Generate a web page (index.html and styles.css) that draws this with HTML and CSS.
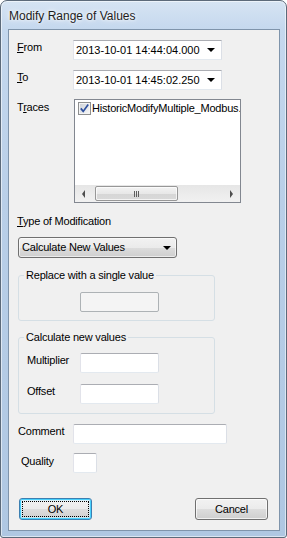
FILE: index.html
```html
<!DOCTYPE html>
<html lang="en">
<head>
    <meta charset="UTF-8">
    <title>Modify Range of Values</title>
    <link rel="stylesheet" href="styles.css">
</head>
<body>
<div class="window">
    <div class="titlebar">Modify Range of Values</div>
    <div class="client">

        <div class="row row-from">
            <span class="label"><u>F</u>rom</span>
            <div class="combo date">
                <span class="combo-text">2013-10-01 14:44:04.000</span>
                <span class="arrow"></span>
            </div>
        </div>

        <div class="row row-to">
            <span class="label"><u>T</u>o</span>
            <div class="combo date">
                <span class="combo-text">2013-10-01 14:45:02.250</span>
                <span class="arrow"></span>
            </div>
        </div>

        <div class="row row-traces">
            <span class="label label-traces">T<u>r</u>aces</span>
            <div class="listbox">
                <div class="list-items">
                    <div class="list-item">
                        <svg class="check" width="13" height="13" viewBox="0 0 13 13">
                            <defs>
                                <linearGradient id="cb" x1="0" y1="0" x2="1" y2="1">
                                    <stop offset="0" stop-color="#cfd3d9"/>
                                    <stop offset="1" stop-color="#f6f6f6"/>
                                </linearGradient>
                            </defs>
                            <rect x="0.5" y="0.5" width="12" height="12" fill="#f4f4f4" stroke="#8e8f8f"/>
                            <rect x="2" y="2" width="9" height="9" fill="url(#cb)"/>
                            <path d="M2.8 6.4 L5.2 9.4 L10.2 2.6" fill="none" stroke="#2d4f9e" stroke-width="1.7"/>
                        </svg>
                        <span class="item-text">HistoricModifyMultiple_Modbus.</span>
                    </div>
                </div>
                <div class="hscroll">
                    <div class="sb-btn"><span class="sb-left"></span></div>
                    <div class="sb-track">
                        <div class="sb-thumb">
                            <span class="grip"></span>
                        </div>
                    </div>
                    <div class="sb-btn"><span class="sb-right"></span></div>
                </div>
            </div>
        </div>

        <div class="type-label"><u>T</u>ype of Modification</div>

        <div class="combo-btn">
            <span class="combo-text">Calculate New Values</span>
            <span class="arrow"></span>
        </div>

        <fieldset class="group group-replace">
            <legend>Replace with a single value</legend>
            <div class="textbox disabled tb-single"></div>
        </fieldset>

        <fieldset class="group group-calc">
            <legend>Calculate new values</legend>
            <div class="row row-mult">
                <span class="label label-group">Multiplier</span>
                <div class="textbox tb-group"></div>
            </div>
            <div class="row row-offset">
                <span class="label label-group">Offset</span>
                <div class="textbox tb-group"></div>
            </div>
        </fieldset>

        <div class="row row-comment">
            <span class="label label-comment">Comment</span>
            <div class="textbox tb-comment"></div>
        </div>

        <div class="row row-quality">
            <span class="label label-quality">Quality</span>
            <div class="textbox tb-quality"></div>
        </div>

        <div class="buttons">
            <div class="button default"><span class="focus">OK</span></div>
            <div class="button">Cancel</div>
        </div>

    </div>
</div>
</body>
</html>
```

FILE: styles.css
```css
* {
    box-sizing: border-box;
}

body {
    margin: 0;
    font-family: "Liberation Sans", Arial, sans-serif;
    font-size: 11px;
    color: #000;
    letter-spacing: -0.2px;
}

/* window frame */
.window {
    width: 287px;
    height: 538px;
    border: 1px solid #5c6a7a;
    border-radius: 7px 7px 3px 3px;
    padding: 0 6px 6px 7px;
    display: flex;
    flex-direction: column;
    background: linear-gradient(to bottom, #d6e4f3 0, #c5d8ee 28px, #b9cfe8 200px, #afc7e2 100%);
    box-shadow: inset 0 0 0 1px rgba(255, 255, 255, 0.55);
}

.titlebar {
    height: 28px;
    display: flex;
    align-items: center;
    padding: 1px 0 0 1px;
    font-size: 12px;
    letter-spacing: 0;
    color: #1e1e1e;
    text-shadow: 0 0 6px #fff, 0 0 3px #fff;
}

.client {
    flex: 1;
    border: 1px solid #7f94ab;
    background: #f0f0f0;
    padding-top: 10px;
}

/* rows */
.row {
    display: flex;
    align-items: flex-start;
    margin-left: 8px;
}

.label {
    width: 56px;
    line-height: 13px;
    margin-top: 1px;
    flex-shrink: 0;
}

.row-to {
    margin-top: 10px;
}

.row-traces {
    margin-top: 9px;
}

.label-traces {
    width: 57px;
    margin-top: 2px;
}

/* date combos */
.combo {
    width: 149px;
    height: 20px;
    background: #fff;
    border: 1px solid;
    border-color: #abadb3 #dbdfe6 #e3e9ef #e2e3ea;
    display: flex;
    align-items: center;
    padding: 0 0 0 2px;
}

.combo-text {
    flex: 1;
    line-height: 13px;
    white-space: nowrap;
}

.date .combo-text {
    letter-spacing: 0;
}

.arrow {
    width: 0;
    height: 0;
    border-left: 4px solid transparent;
    border-right: 4px solid transparent;
    border-top: 4px solid #000;
    margin-right: 6px;
}

/* listbox */
.listbox {
    width: 167px;
    height: 104px;
    border: 1px solid #828790;
    background: #fff;
    display: flex;
    flex-direction: column;
}

.list-items {
    flex: 1;
    overflow: hidden;
}

.list-item {
    display: flex;
    align-items: center;
    padding: 2px 0 0 3px;
    white-space: nowrap;
}

.check {
    flex-shrink: 0;
    margin-right: 1px;
}

.item-text {
    line-height: 13px;
}

.hscroll {
    height: 17px;
    display: flex;
    background: linear-gradient(to bottom, #e6e6e6, #f1f1f1);
}

.sb-btn {
    width: 17px;
    display: flex;
    align-items: center;
    justify-content: center;
}

.sb-left {
    border-top: 4px solid transparent;
    border-bottom: 4px solid transparent;
    border-right: 3px solid #4d4d4d;
}

.sb-right {
    border-top: 4px solid transparent;
    border-bottom: 4px solid transparent;
    border-left: 3px solid #4d4d4d;
}

.sb-track {
    flex: 1;
    padding: 1px 0 1px 3px;
}

.sb-thumb {
    width: 83px;
    height: 15px;
    border: 1px solid #979797;
    border-radius: 2px;
    background: linear-gradient(to bottom, #f3f3f3 0, #e8e8e8 50%, #d6d6d6 51%, #d9d9d9 100%);
    box-shadow: inset 0 0 0 1px rgba(255, 255, 255, 0.7);
    display: flex;
    align-items: center;
    justify-content: center;
}

.grip {
    width: 5px;
    height: 6px;
    background: linear-gradient(to right, #5e5e5e 0 1px, transparent 1px 2px, #5e5e5e 2px 3px, transparent 3px 4px, #5e5e5e 4px 5px);
}

/* type of modification */
.type-label {
    margin: 12px 0 0 8px;
    line-height: 13px;
}

.combo-btn {
    width: 159px;
    height: 21px;
    margin: 9px 0 0 9px;
    border: 1px solid #707070;
    border-radius: 3px;
    background: linear-gradient(to bottom, #f2f2f2 0, #ebebeb 50%, #dddddd 51%, #cfcfcf 100%);
    box-shadow: inset 0 0 0 1px rgba(255, 255, 255, 0.6);
    display: flex;
    align-items: center;
    padding-left: 3px;
}

.combo-btn .arrow {
    margin-right: 5px;
}

/* group boxes */
.group {
    width: 197px;
    margin: 10px 0 0 9px;
    padding: 0 0 8px 0;
    border: 1px solid #d5dfe5;
    border-radius: 3px;
    min-inline-size: 0;
}

.group legend {
    margin-left: 5px;
    padding: 0 2px;
    line-height: 15px;
}

.group-calc {
    margin-top: 9px;
    padding-bottom: 9px;
}

.textbox {
    height: 20px;
    background: #fff;
    border: 1px solid;
    border-color: #abadb3 #dbdfe6 #e3e9ef #e2e3ea;
    border-radius: 2px;
}

.textbox.disabled {
    background: #f4f4f4;
    border-color: #adb2b5;
}

.tb-single {
    width: 79px;
    margin: 9px 0 0 61px;
}

.row-mult {
    margin-top: 8px;
}

.row-offset {
    margin-top: 11px;
}

.label-group {
    width: 53px;
}

.tb-group {
    width: 79px;
}

.row-comment {
    margin: 10px 0 0 9px;
}

.label-comment {
    width: 55px;
}

.tb-comment {
    width: 154px;
}

.row-quality {
    margin: 9px 0 0 12px;
}

.label-quality {
    width: 52px;
    margin-top: 2px;
}

.tb-quality {
    width: 24px;
}

/* buttons */
.buttons {
    display: flex;
    justify-content: space-between;
    margin: 25px 11px 0 10px;
}

.button {
    width: 73px;
    height: 22px;
    border: 1px solid #707070;
    border-radius: 3px;
    background: linear-gradient(to bottom, #f2f2f2 0, #ebebeb 50%, #dddddd 51%, #cfcfcf 100%);
    box-shadow: inset 0 0 0 1px rgba(255, 255, 255, 0.7);
    display: flex;
    align-items: center;
    justify-content: center;
    line-height: 13px;
}

.button.default {
    border-color: #3c7fb1;
    box-shadow: inset 0 0 0 1px #48d0fc, inset 0 0 0 2px rgba(200, 240, 255, 0.6);
    padding: 2px;
}

.focus {
    flex: 1;
    align-self: stretch;
    display: flex;
    align-items: center;
    justify-content: center;
    border: 1px dotted #000;
}
```
